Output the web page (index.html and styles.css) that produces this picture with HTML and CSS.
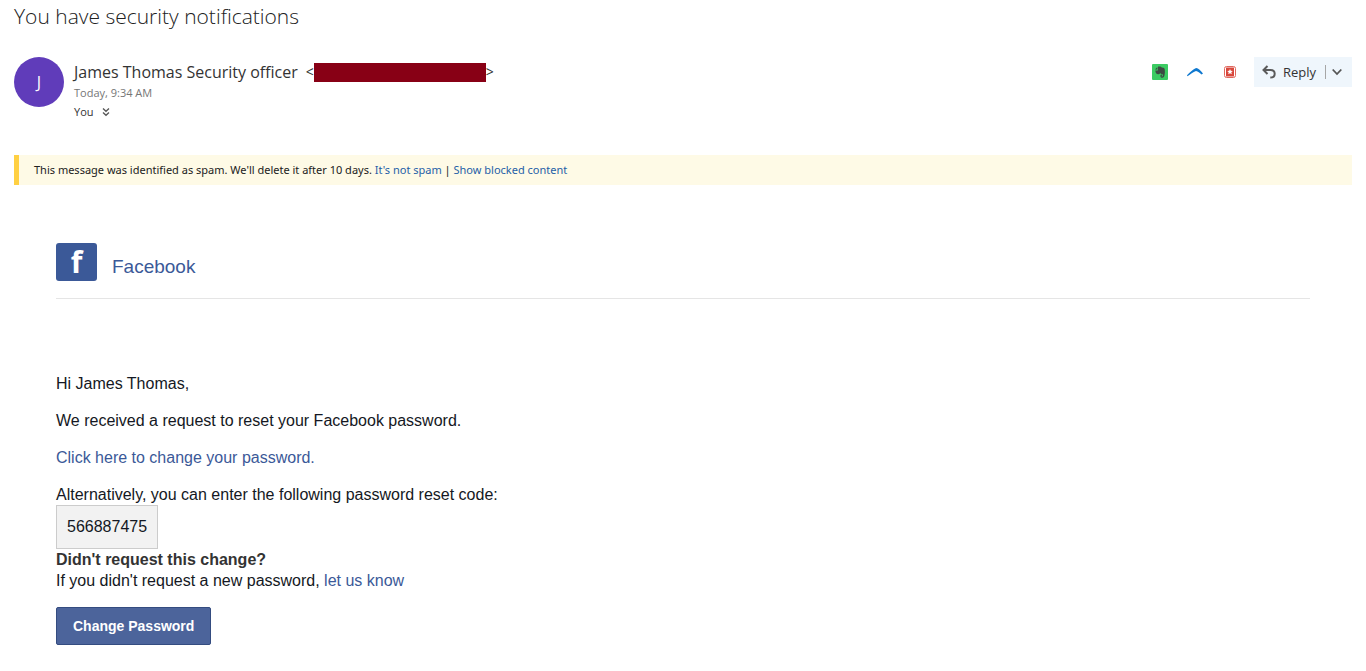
FILE: index.html
```html
<!DOCTYPE html>
<html lang="en">
<head>
    <meta charset="UTF-8">
    <meta name="viewport" content="width=device-width, initial-scale=1.0">
    <title>You have security notifications</title>
    <link rel="stylesheet" href="styles.css">
</head>

<body>

    <!-- Subject -->
    <h1 class="subject">You have security notifications</h1>

    <!-- Sender and message actions -->
    <header class="message-header">
        <div class="avatar">J</div>
        <div class="sender">
            <div class="sender-name">James Thomas Security officer <span class="address">&lt;<span class="redacted"></span>&gt;</span></div>
            <div class="sent">Today, 9:34 AM</div>
            <div class="recipients">You
                <svg width="8" height="10" viewBox="0 0 8 10" fill="none" stroke="#555" stroke-width="1.3"><path d="M1 1.5l3 2.8 3-2.8M1 5.5l3 2.8 3-2.8"/></svg>
            </div>
        </div>
        <div class="actions">
            <div class="addins">
                <button aria-label="Evernote">
                    <svg width="16" height="16" viewBox="0 0 16 16">
                        <rect width="16" height="16" rx="1" fill="#3bcb62"/>
                        <path d="M6 2.6h2.2c.7 0 1.1.4 1.5.8l1.8.3c.8.2 1.1.8 1.3 2 .2 1.8.2 3.6-.3 5.6-.3 1.6-.9 2.4-2.2 2.4-1.3 0-1.9-.7-1.9-1.8 0-1 .7-1.5 1.9-1.4v.9c-.6 0-.8.2-.8.5 0 .4.3.5.7.5.6 0 .8-.5.8-1.2 0-.8-.5-1.1-1.3-1.2-.8 0-1.2-.3-1.4-.9-.3.9-1 1.2-2.1 1.1-2-.2-2.6-.9-2.9-3.7H5.5c.4 0 .5-.2.5-.5z" fill="#3d4a43"/>
                        <path d="M5.4 2.9v2.5H3z" fill="#3d4a43"/>
                    </svg>
                </button>
                <button aria-label="Boomerang">
                    <svg width="16" height="16" viewBox="0 0 16 16"><path d="M0 11.3C3 8.3 6 5 9.1 4c2.3.2 4.7 2.6 6.9 5.6l-1.5.8C12.5 8.8 11 7.5 9 7 6 7.8 3.5 10.3.5 12.2z" fill="#0f78cf"/></svg>
                </button>
                <button aria-label="Save contact">
                    <svg width="16" height="16" viewBox="0 0 16 16">
                        <rect x="2.5" y="2.5" width="11" height="11" rx="2" fill="#fff" stroke="#e0685e"/>
                        <path d="M4 3.5h8v9H4z" fill="#d9473c"/>
                        <path d="M8 5l.8 1.8 2 .2-1.5 1.3.5 1.9L8 9.2l-1.8 1 .5-1.9L5.2 7l2-.2z" fill="#fff"/>
                    </svg>
                </button>
            </div>
            <div class="reply-group">
                <button class="reply">
                    <svg width="14" height="14" viewBox="0 0 14 14" fill="none" stroke="#5a5a5a" stroke-width="2"><path d="M5.5 1L1.5 5l4 4M2 5h6.5c2.8 0 4.2 1.5 4.2 3.7 0 2.5-1.6 3.9-4.4 3.9"/></svg>
                    Reply
                </button>
                <button class="reply-more" aria-label="More reply options">
                    <svg width="10" height="8" viewBox="0 0 10 8" fill="none" stroke="#555" stroke-width="1.8"><path d="M.7 1.5L5 6l4.3-4.5"/></svg>
                </button>
            </div>
        </div>
    </header>

    <!-- Spam notice -->
    <div class="notice">This message was identified as spam. We'll delete it after 10 days. <a href="#">It's not spam</a> | <a href="#">Show blocked content</a></div>

    <!-- Message body -->
    <main class="message">
        <div class="brand">
            <span class="brand-logo">f</span>
            <span class="brand-name">Facebook</span>
        </div>
        <p>Hi James Thomas,</p>
        <p>We received a request to reset your Facebook password.</p>
        <p><a href="#">Click here to change your password.</a></p>
        <div>Alternatively, you can enter the following password reset code:</div>
        <div class="code">566887475</div>
        <h2>Didn't request this change?</h2>
        <p>If you didn't request a new password, <a href="#">let us know</a></p>
        <button class="change">Change Password</button>
    </main>

</body>
</html>
```
FILE: styles.css
```css
body {
    font-family: "Open Sans", "Segoe UI", sans-serif;
    margin: 0;
    padding: 0 14px;
    background-color: #fff;
    color: #333;
}

a {
    text-decoration: none;
}

button {
    border: none;
    background: none;
    padding: 0;
    font-family: inherit;
    color: inherit;
    cursor: pointer;
}

svg {
    display: block;
}

/* Subject */
.subject {
    margin: 0;
    color: #212121;
    font-size: 21px;
    font-weight: 300;
    line-height: 33px;
}

/* Header */
.message-header {
    display: flex;
    align-items: flex-start;
    margin-top: 24px;
}

.avatar {
    width: 50px;
    height: 50px;
    border-radius: 50%;
    background-color: #603cba;
    color: #fff;
    font-size: 16px;
    line-height: 50px;
    text-align: center;
    flex-shrink: 0;
}

.sender {
    flex: 1;
    padding-left: 10px;
    font-size: 11px;
}

.sender-name {
    display: flex;
    align-items: center;
    gap: 8px;
    font-size: 16px;
    line-height: 30px;
}

.address {
    display: flex;
    align-items: center;
    font-size: 14px;
}

.redacted {
    width: 172px;
    height: 19px;
    background-color: #880015;
}

.sent {
    color: #767676;
    line-height: 12px;
}

.recipients {
    display: flex;
    align-items: center;
    gap: 8px;
    line-height: 26px;
}

.actions {
    display: flex;
    align-items: center;
    gap: 16px;
}

.addins {
    display: flex;
    gap: 19px;
}

.reply-group {
    display: flex;
    align-items: center;
    height: 30px;
    padding: 0 10px 0 8px;
    background-color: #eff6fc;
}

.reply {
    display: flex;
    align-items: center;
    gap: 7px;
    font-size: 13px;
    padding-right: 9px;
}

.reply-more {
    border-left: 1px solid #a6a6a6;
    height: 14px;
    padding-left: 6px;
}

/* Spam notice */
.notice {
    margin-top: 30px;
    padding-left: 15px;
    border-left: 5px solid #ffd042;
    background-color: #fefae6;
    color: #212121;
    font-family: "Noto Sans", "Segoe UI", sans-serif;
    font-size: 11px;
    line-height: 30px;
}

.notice a {
    color: #1f5fa6;
}

/* Message */
.message {
    margin: 58px 42px 26px;
    font-family: "Liberation Sans", Arial, sans-serif;
    font-size: 16px;
    line-height: 21px;
    color: #141823;
}

.message p {
    margin: 0 0 16px;
}

.message h2 {
    margin: 0;
    font-size: 16px;
    color: #333;
}

.message a {
    color: #3b5998;
}

.brand {
    display: flex;
    align-items: center;
    gap: 15px;
    padding-bottom: 17px;
    margin-bottom: 74px;
    border-bottom: 1px solid #e5e5e5;
}

.brand-logo {
    width: 41px;
    height: 38px;
    border-radius: 3px;
    background-color: #3b5998;
    color: #fff;
    font-family: "Noto Sans", sans-serif;
    font-size: 30px;
    font-weight: bold;
    line-height: 38px;
    text-align: center;
}

.brand-name {
    padding-top: 8px;
    font-size: 19px;
    color: #3b5998;
}

.code {
    width: max-content;
    padding: 10px;
    border: 1px solid #ccc;
    background-color: #f2f2f2;
    line-height: 22px;
}

.change {
    height: 38px;
    padding: 0 16px;
    border: 1px solid #344c80;
    border-radius: 2px;
    background-color: #4c649b;
    color: #fff;
    font-size: 14px;
    font-weight: bold;
}
```
